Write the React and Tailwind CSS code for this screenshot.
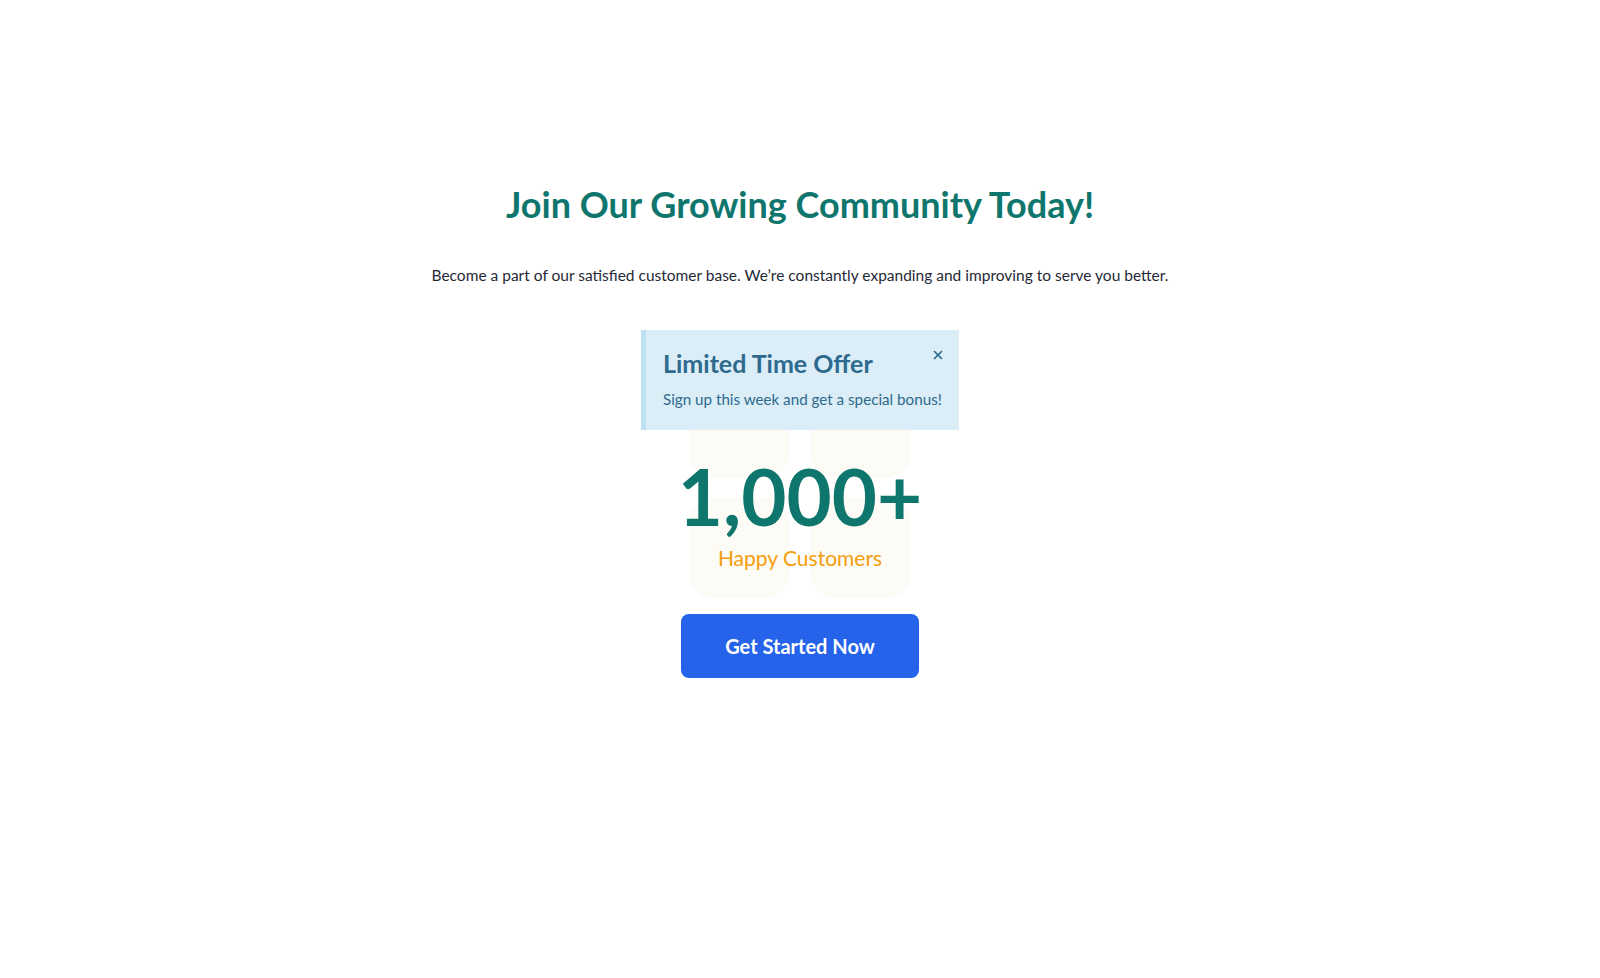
import { X } from 'lucide-react';

export default function App() {
    return (
        <div className="min-h-screen bg-white font-['Lato',_sans-serif] flex flex-col items-center pt-[180px]">
            {/* Heading */}
            <h1 className="text-[36px] leading-[48px] font-bold text-[#0f766e] text-center">
                Join Our Growing Community Today!
            </h1>
            <p className="mt-[35px] text-[15.5px] leading-6 text-[#1f2937] text-center">
                Become a part of our satisfied customer base. We’re constantly expanding and improving to serve you better.
            </p>

            {/* Offer alert */}
            <div className="relative z-10 mt-[43px] w-[318px] bg-[#dbedf6] border-l-[5px] border-[#bde0f3] pl-[17px] pr-4 pt-[17px] pb-[19px] text-[#2d6a8e]">
                <h2 className="text-[25px] leading-8 font-bold">Limited Time Offer</h2>
                <p className="mt-[8px] text-[15.2px] leading-6">Sign up this week and get a special bonus!</p>
                <button className="absolute top-[18px] right-[14px] text-[#2d6a8e]">
                    <X className="h-[14px] w-[14px]" strokeWidth={3} />
                </button>
            </div>

            {/* Stat */}
            <div className="relative flex flex-col items-center pt-[27px] pb-[42px]">
                <div className="absolute left-1/2 -translate-x-1/2 -top-[52px] w-[222px] grid grid-cols-2 gap-x-[22px] gap-y-[20px]">
                    <div className="w-[100px] h-[100px] rounded-3xl bg-[#fcfbf6]"></div>
                    <div className="w-[100px] h-[100px] rounded-3xl bg-[#fcfbf6]"></div>
                    <div className="w-[100px] h-[100px] rounded-3xl bg-[#fcfbf6]"></div>
                    <div className="w-[100px] h-[100px] rounded-3xl bg-[#fcfbf6]"></div>
                </div>
                <div className="relative text-[78px] leading-[78px] font-bold text-[#0f766e]">1,000+</div>
                <div className="relative mt-[9px] text-[21px] leading-7 text-[#f59e0b]">Happy Customers</div>
            </div>

            {/* CTA */}
            <button className="w-[238px] h-[64px] rounded-lg bg-[#2563eb] text-white text-[20px] font-bold">
                Get Started Now
            </button>
        </div>
    );
}
